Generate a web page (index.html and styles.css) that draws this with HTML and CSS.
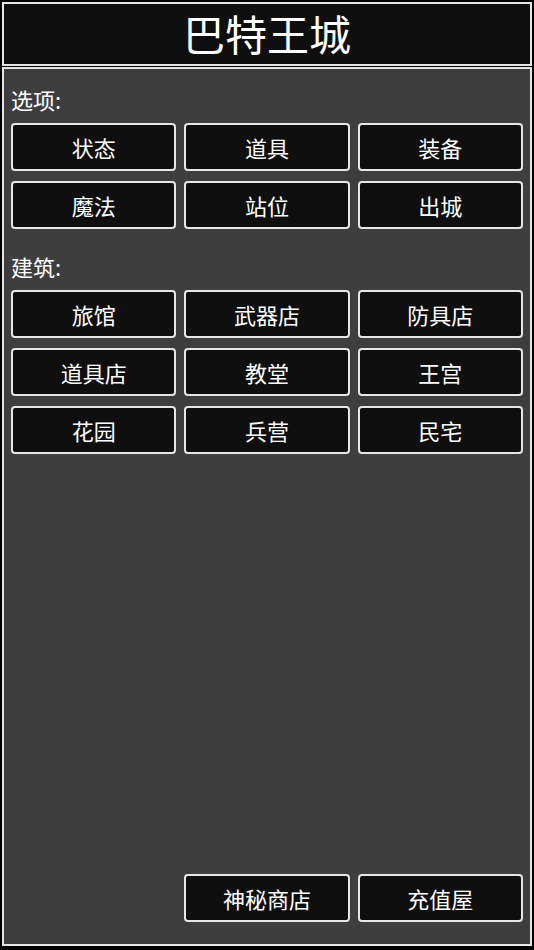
FILE: index.html
```html
<!DOCTYPE html>
<html lang="zh">
<head>
    <meta name="viewport" content="width=device-width, initial-scale=1.0">
    <meta charset="UTF-8">
    <title>巴特王城</title>
    <link rel="stylesheet" href="styles.css">
</head>
<body>
    <div class="header">巴特王城</div>
    <div class="panel">
        <div class="section-label">选项:</div>
        <div class="btn-grid">
            <button class="btn">状态</button>
            <button class="btn">道具</button>
            <button class="btn">装备</button>
            <button class="btn">魔法</button>
            <button class="btn">站位</button>
            <button class="btn">出城</button>
        </div>
        <div class="section-label second">建筑:</div>
        <div class="btn-grid">
            <button class="btn">旅馆</button>
            <button class="btn">武器店</button>
            <button class="btn">防具店</button>
            <button class="btn">道具店</button>
            <button class="btn">教堂</button>
            <button class="btn">王宫</button>
            <button class="btn">花园</button>
            <button class="btn">兵营</button>
            <button class="btn">民宅</button>
        </div>
        <div class="btn-grid bottom">
            <button class="btn col2">神秘商店</button>
            <button class="btn">充值屋</button>
        </div>
    </div>
</body>
</html>
```

FILE: styles.css
```css
html, body {
    height: 100%;
}
body {
    margin: 0;
    padding: 2px 2px 4px 2px;
    box-sizing: border-box;
    background-color: #000;
    font-family: "Noto Sans CJK SC", "Noto Sans", sans-serif;
    color: #fff;
    display: flex;
    flex-direction: column;
}
.header {
    height: 60px;
    border: 2px solid #e6e6e6;
    background-color: #0f0f0f;
    text-align: center;
    font-size: 42px;
    line-height: 58px;
    flex: none;
}
.panel {
    flex: 1;
    margin-top: 1px;
    border: 2px solid #e6e6e6;
    background-color: #3e3e3e;
    padding: 18px 7px 22px 7px;
    display: flex;
    flex-direction: column;
}
.section-label {
    font-size: 22px;
    line-height: 24px;
    margin-bottom: 12px;
}
.section-label.second {
    margin-top: 25px;
}
.btn-grid {
    display: grid;
    grid-template-columns: repeat(3, 1fr);
    grid-auto-rows: 48px;
    column-gap: 8px;
    row-gap: 10px;
}
.btn-grid.bottom {
    margin-top: auto;
}
.btn {
    background-color: #0f0f0f;
    border: 2px solid #e6e6e6;
    border-radius: 4px;
    color: #fff;
    font-family: "Noto Sans CJK SC", "Noto Sans", sans-serif;
    font-size: 22px;
    padding: 0;
}
.col2 {
    grid-column: 2;
}
```
